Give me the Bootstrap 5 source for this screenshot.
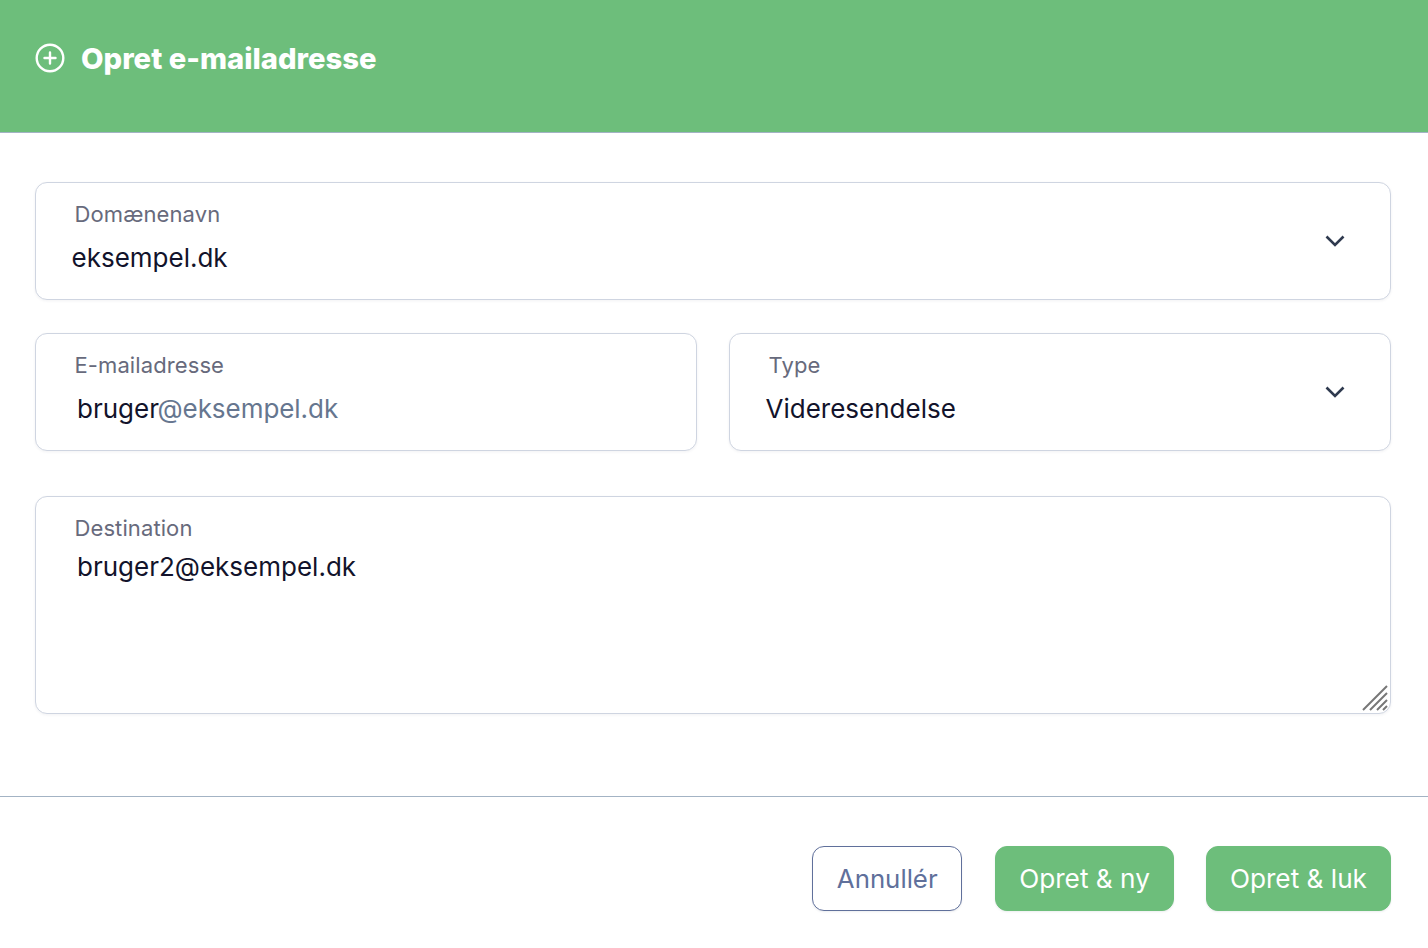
<!DOCTYPE html>
<html lang="da">
<head>
<meta charset="utf-8">
<title>Opret e-mailadresse</title>
<link rel="stylesheet" href="https://cdn.jsdelivr.net/npm/bootstrap@5.3.0/dist/css/bootstrap.min.css">
<style>
html,body{height:100%;}
body{font-family:Inter,"Liberation Sans",sans-serif;background:#fff;color:#12132b;overflow:hidden;}
.dlg-head{height:133px;background:#6dbe7b;border-bottom:1px solid #a3b3c4;padding:0 35px 16px;gap:16px;color:#fff;}
.dlg-head svg{margin-left:-.5px;margin-right:.5px;}
.dlg-title{font-size:29.2px;font-weight:800;line-height:34px;margin:1px 0 0;}
.dlg-body{padding:49px 37px 0 35px;}
.fld{position:relative;background:#fff;border:1px solid #cfd5e1;border-radius:12px;box-shadow:0 1px 3px rgba(30,40,70,.06);height:118px;padding:18px 38px 0 38.5px;}
.fld-area{height:218px;padding-top:18px;}
.fld-label{font-size:22px;line-height:27px;color:#676a7c;letter-spacing:.1px;display:block;margin:0;}
.fld-val{font-size:26px;line-height:32px;color:#12132b;margin-top:14px;}
.fld-val.sel{margin-left:-3px;}
.fld-val.txt{margin-left:2.5px;}
.fld-area .fld-val{margin-top:9px;}
.fld-suffix{color:#66768f;margin-left:-1.5px;letter-spacing:-.05px;}
.fld-chev{position:absolute;right:45.5px;top:51px;}
.fld-grip{position:absolute;right:2px;bottom:2px;}
.dlg-row{gap:32px;margin-top:33px;}
.dlg-row>.fld{flex:1 1 0;}
.fld-gap{margin-top:45px;}
.dlg-foot{position:absolute;left:0;right:0;top:796px;border-top:1px solid #a3b3c4;padding:49px 37px 0 0;gap:32px;}
.dlg-btn{height:65px;border-radius:12px;font-size:26.2px;line-height:33px;padding:0 23px;font-weight:400;box-shadow:0 1px 2px rgba(30,40,70,.08);}
.dlg-ghost{background:#fff;border:1px solid #60709b;color:#60709b;font-size:25.8px;padding:0 23.5px;margin-right:1px;}
.dlg-go{background:#6dbe7b;border:1px solid #6dbe7b;color:#fff;}
</style>
</head>
<body>
<header class="dlg-head d-flex align-items-center">
  <svg width="30" height="30" viewBox="0 0 30 30" fill="none" stroke="#fff" stroke-width="2.4" stroke-linecap="round" aria-hidden="true"><circle cx="15" cy="15" r="13.3"/><path d="M15 9.5v11M9.5 15h11"/></svg>
  <h1 class="dlg-title">Opret e-mailadresse</h1>
</header>
<main class="dlg-body">
  <div class="fld">
    <span class="fld-label">Domænenavn</span>
    <div class="fld-val sel">eksempel.dk</div>
    <svg class="fld-chev" width="20" height="14" viewBox="0 0 20 14" fill="none" stroke="#2f3a4f" stroke-width="2.6" aria-hidden="true"><path d="M1.5 2.5 10 11l8.5-8.5"/></svg>
  </div>
  <div class="dlg-row d-flex">
    <div class="fld">
      <span class="fld-label">E-mailadresse</span>
      <div class="fld-val txt">bruger<span class="fld-suffix">@eksempel.dk</span></div>
    </div>
    <div class="fld">
      <span class="fld-label">Type</span>
      <div class="fld-val sel">Videresendelse</div>
      <svg class="fld-chev" width="20" height="14" viewBox="0 0 20 14" fill="none" stroke="#2f3a4f" stroke-width="2.6" aria-hidden="true"><path d="M1.5 2.5 10 11l8.5-8.5"/></svg>
    </div>
  </div>
  <div class="fld fld-area fld-gap">
    <span class="fld-label">Destination</span>
    <div class="fld-val txt">bruger2@eksempel.dk</div>
    <svg class="fld-grip" width="26" height="26" viewBox="0 0 26 26" stroke="#777" stroke-width="2" aria-hidden="true"><path d="M1 25 25 1M8 25 25 8M15 25 25 15M21 25l4-4"/></svg>
  </div>
</main>
<footer class="dlg-foot d-flex justify-content-end">
  <button type="button" class="btn dlg-btn dlg-ghost">Annullér</button>
  <button type="button" class="btn dlg-btn dlg-go">Opret &amp; ny</button>
  <button type="button" class="btn dlg-btn dlg-go">Opret &amp; luk</button>
</footer>
<script src="https://cdn.jsdelivr.net/npm/bootstrap@5.3.0/dist/js/bootstrap.bundle.min.js"></script>
</body>
</html>
